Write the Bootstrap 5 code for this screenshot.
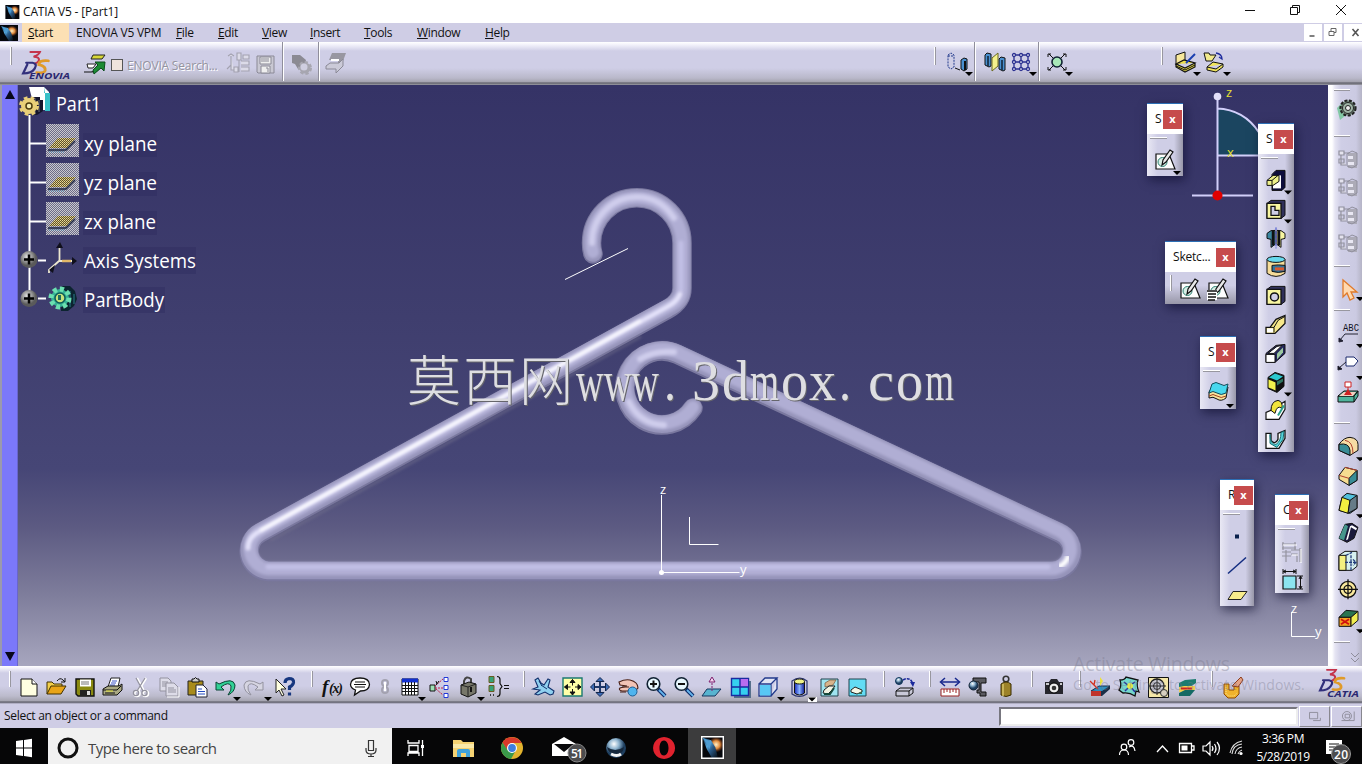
<!DOCTYPE html>
<html lang="en">
<head>
    <meta charset="UTF-8">
    <meta name="viewport" content="width=device-width, initial-scale=1.0">
    <title>CATIA V5 - [Part1]</title>
    <!-- Bootstrap CSS -->
    <link href="https://cdn.jsdelivr.net/npm/bootstrap@5.3.1/dist/css/bootstrap.min.css" rel="stylesheet">
    <style>
        body {
            width: 1362px;
            height: 764px;
            overflow: hidden;
            font-family: "Open Sans", "Noto Sans", "Noto Sans CJK SC", sans-serif;
            font-size: 12px;
            line-height: 1;
            color: #111;
            background: #cfcde5;
        }

        svg { display: block; flex: none; overflow: visible; }

        .title-bar { height: 23px; background: #fff; letter-spacing: -.15px; }
        .title-bar .caption { width: 45px; }

        .menu-bar { height: 19px; background: #cfcde5; letter-spacing: -.35px; }
        .menu-bar a { color: #111; text-decoration: none; flex: none; line-height: 19px; height: 19px; white-space: nowrap; }
        .menu-bar a::first-letter { text-decoration: underline; }
        .menu-bar .start-item { background: #fce0b4; width: 47px; padding-left: 6px; }
        .menu-bar .vpm { width: 107px; padding-left: 7px; letter-spacing: -.25px; }
        .menu-bar .vpm::first-letter { text-decoration: none; }
        .w-42 { width: 42px; }
        .w-44 { width: 44px; }
        .w-48 { width: 48px; }
        .w-54 { width: 54px; }
        .w-53 { width: 53px; }
        .w-68 { width: 68px; }
        .mdi { width: 18px; height: 17px; background: #fff; margin-left: 2px; }

        .tool-top {
            height: 43px;
            background: linear-gradient(#fff 0, #f1f0fa 3px, #cfcee6 9px, #cfcee6 26px, #b9b8ca 36px, #a3a2ae 40px, #55555f 41px, #8e8e98 42px);
        }
        .ico { width: 28px; height: 28px; }
        .ico-30 { width: 30px; }
        .ico-22 { width: 22px; }
        .ico-32 { width: 32px; }
        .grip {
            width: 18px;
            flex: none;
            background: linear-gradient(90deg, #fff 50%, #98979f 50%) no-repeat 11px 5px / 2px 16px;
        }
        .tool-top .grip { width: 19px; background-position: 10px 5px; background-size: 2px 18px; }
        .divide { width: 2px; height: 39px; margin: 0 3px; background: linear-gradient(90deg, #8f8e9b 50%, #fff 50%); flex: none; }
        .spacer { width: 80px; }
        .tick { width: 12px; height: 12px; border: 1px solid #555; background: #efe3dc; margin: 17px 4px 0 2px; }
        .dim-text { width: 96px; padding-top: 18px; color: #94939f; letter-spacing: -.2px; text-shadow: 1px 1px #fff; }

        .work { height: 581px; }
        .v-scroll { width: 18px; background: #7b78fa; border-left: 2px solid #9b99ad; border-right: 1px solid #6966cc; }
        .view { width: 1310px; }
        .side { width: 34px; background: linear-gradient(90deg, #fff 4px, #e6e5f3 7px, #cfcee6 13px, #cbcae2 28px, #b5b4c6); padding-left: 6px; }
        .side .ico-tall { width: 28px; height: 30px; }
        .side .ico-mid { width: 28px; height: 28.7px; }
        .v-grip { background: linear-gradient(#fff 50%, #98979f 50%) no-repeat 0 center / 16px 2px; height: 18px; flex: none; }
        .v-grip.g9 { height: 9px; }
        .v-grip.g23 { height: 23px; background-position: 0 13px; }
        .v-grip.g14 { height: 14px; }
        .v-grip.g25 { height: 25px; background-position: 0 15px; }

        .tool-bottom {
            height: 38px;
            background: linear-gradient(#fff 0, #f4f3fb 2px, #cfcee6 7px, #cfcee6 20px, #bcbbcc 30px, #a5a4b0 35px, #55555f 36px, #cfcde5 38px);
        }
        .tool-bottom .ico { margin-top: 7px; }
        .tool-bottom .grip { background-position: 9px 5px; }
        .status { height: 24px; background: #cfcde5; letter-spacing: -.3px; }
        .power-input { width: 299px; height: 19px; background: #fff; border: 2px solid; border-color: #77767f #eee #eee #77767f; }
        .push { width: 31px; height: 21px; border: 1px solid; border-color: #fff #88878f #88878f #fff; margin-left: 1px; }

        .task { height: 36px; background: #060607; color: #fff; }
        .search-box { width: 344px; height: 36px; background: #f1f1f1; color: #444; font-size: 15px; letter-spacing: -.5px; }
        .apps { width: 344px; }
        .apps > div { flex: 1 1 0; display: flex; align-items: center; justify-content: center; padding-top: 3px; }
        .apps .on { background: #3c3c3d; }
        .clock { width: 66px; text-align: center; line-height: 18px; letter-spacing: -.4px; padding-top: 3px; }

        /* floating toolbars over the 3D view */
        .float-bar { position: absolute; width: 36px; background: linear-gradient(90deg, #e9e8f4, #cfcee6 30%, #cfcee6 75%, #9897a8); box-shadow: 2px 4px 10px rgba(10, 10, 40, .6); border-top: 1px solid #2c6fb5; }
        .float-bar header { height: 30px; background: #fff; padding: 6px 1px 0 8px; }
        .float-bar header span { width: 8px; padding-top: 3px; letter-spacing: -.2px; }
        .float-bar header b { background: #c64b4c; color: #fff; width: 19px; height: 19px; text-align: center; line-height: 17px; font-size: 11px; position: relative; }
        .float-bar .bar-line { height: 2px; width: 17px; margin: 3px 0 0 3px; background: linear-gradient(#fff 50%, #98979f 50%); }
        .float-bar .ico { margin: 0 4px; }
        .f-sketch { left: 1147px; top: 103px; height: 73px; }
        .f-sketch .ico, .f-surface .ico { margin-top: 7px; }
        .f-solid { left: 1258px; top: 123px; height: 329px; }
        .f-solid .ico { height: 28.8px; }
        .f-solid .ico:first-of-type { margin-top: 7px; }
        .f-pair { left: 1165px; top: 241px; width: 71px; height: 63px; background: linear-gradient(#e9e8f4, #cfcee6 40%, #cfcee6 70%, #9897a8); }
        .f-pair header span { width: 42px; }
        .f-pair .grip { width: 9px; background-position: 5px 3px; }
        .f-pair .ico { margin: 3px 0 0 4px; width: 24px; }
        .f-surface { left: 1200px; top: 336px; height: 73px; }
        .f-ref { left: 1220px; top: 479px; width: 34px; height: 127px; }
        .f-cons { left: 1275px; top: 494px; width: 34px; height: 99px; }
        .f-ref .ico, .f-cons .ico { margin: 0 3px; }
        .f-ref .bar-line, .f-cons .bar-line { margin-bottom: 7px; }
        .f-cons .bar-line { margin-bottom: 8px; }
        .f-ref .ico { height: 29px; }
        .f-ref header span, .f-cons header span { width: 6px; }

        .activate { position: absolute; left: 1073px; top: 653px; color: rgba(120, 120, 140, .38); pointer-events: none; white-space: nowrap; }
        .activate .big { font-size: 19.5px; letter-spacing: -.2px; line-height: 22px; }
        .activate .sub { font-size: 14px; line-height: 20px; letter-spacing: .07px; }
    </style>
</head>
<body class="d-flex flex-column position-relative">

    <!-- icon library, every icon sits in a 28x28 box -->
    <svg width="0" height="0" class="position-absolute">
        <defs>
            <linearGradient id="bg" x1="0" y1="0" x2="0" y2="1">
                <stop offset="0" stop-color="#353366"/><stop offset=".4" stop-color="#3f3e6e"/><stop offset=".66" stop-color="#464676"/>
                <stop offset=".76" stop-color="#5c5a82"/><stop offset=".88" stop-color="#7f7e9c"/><stop offset="1" stop-color="#a7a6be"/>
            </linearGradient>
            <linearGradient id="cyl" x1="0" x2="1"><stop offset="0" stop-color="#1a2cc0"/><stop offset=".5" stop-color="#8ab4ff"/><stop offset="1" stop-color="#0a1690"/></linearGradient>
            <radialGradient id="ball" cx=".4" cy=".3"><stop offset="0" stop-color="#fff"/><stop offset=".5" stop-color="#8fb4cf"/><stop offset="1" stop-color="#1e3f60"/></radialGradient>
            <radialGradient id="knob" cx=".4" cy=".35"><stop offset="0" stop-color="#e8e8e8"/><stop offset="1" stop-color="#5a5a5a"/></radialGradient>
            <linearGradient id="comet" x1="0" y1="0" x2="1" y2="1"><stop offset="0" stop-color="#0a1a30"/><stop offset=".35" stop-color="#57a8dd"/><stop offset=".55" stop-color="#2b5d8c"/><stop offset="1" stop-color="#050508"/></linearGradient>
            <radialGradient id="flare"><stop offset="0" stop-color="#fff0c8"/><stop offset=".5" stop-color="#e08a3c"/><stop offset="1" stop-color="#803010" stop-opacity="0"/></radialGradient>
            <pattern id="dots" width="2" height="2" patternUnits="userSpaceOnUse"><rect width="2" height="2" fill="#6d6c88"/><rect width="1" height="1" fill="#c9c9cf"/><rect x="1" y="1" width="1" height="1" fill="#c9c9cf"/></pattern>
            <pattern id="dots-gold" width="2" height="2" patternUnits="userSpaceOnUse"><rect width="2" height="2" fill="#5a5230"/><rect width="1" height="1" fill="#f0dc94"/><rect x="1" y="1" width="1" height="1" fill="#d8c074"/></pattern>
            <filter id="soft" x="-5%" y="-5%" width="110%" height="110%"><feGaussianBlur stdDeviation="1.6"/></filter>

            <g id="drop"><path d="M-4 0h8l-4 4z" fill="#000"/></g>
            <g id="app"><path d="M0 0h16v16H0z" fill="#05070c"/><circle cx="10.500" cy="6" r="5.500" fill="url(#flare)"/><path d="M1 1l6 2 3 5 2 8H8L4 9z" fill="url(#comet)"/><path d="M1 1l6 3-1 5z" fill="#4d9cd2"/></g>

            <g id="new"><path d="M6 6h11l5 5v12H6z" fill="#ffffe1" stroke="#111"/><path d="M17 6v5h5" fill="#fff" stroke="#111"/></g>
            <g id="open"><path d="M4 21V9h5l2 2h8v4" fill="#f3cf4a" stroke="#403000"/><path d="M4 21l4-8h15l-5 8z" fill="#e9a417" stroke="#403000"/><path d="M14 8q3-4 6-1l2 2v-4m0 4h-4" fill="none" stroke="#111"/></g>
            <g id="save"><path d="M5 6h18v17H7l-2-2z" fill="#8a8a10" stroke="#111" stroke-width="1.400"/><path d="M9 6.500h11v7H9z" fill="#fff"/><path d="M10 9h8M10 11h8" stroke="#777"/><path d="M9 17h11v6H9z" fill="#222"/><path d="M16 18h3v4h-3z" fill="#ddd"/></g>
            <g id="print"><path d="M9 14l3-9h9l-2 9z" fill="#fff" stroke="#222"/><path d="M13 8h5M12 10h5M11 12h5" stroke="#3a54c8"/><path d="M4 16l5-3h11l3-2v6l-5 5H4z" fill="#a9a882" stroke="#111"/><path d="M4 17h14l4-4M6 20h10" stroke="#111" fill="none"/><path d="M7 18h7" stroke="#ee4"/></g>
            <g id="cut" fill="none" stroke="#fff" stroke-width="2.400"><path d="M10 5l7 13M19 5l-8 13"/><circle cx="10" cy="20.500" r="2.600"/><circle cx="18.500" cy="20.500" r="2.600"/><g stroke="#93929f" stroke-width="1.300"><path d="M9 5l7 13M18 5l-8 13"/><circle cx="9" cy="20" r="2.600"/><circle cx="17.500" cy="20" r="2.600"/></g></g>
            <g id="copy" fill="#dddce8" stroke="#93929f"><path d="M5 5h8l3 3v10H5z"/><path d="M11 10h8l4 4v9H11z"/><path d="M7 9h6M7 11h4M7 13h4M13 15h6M13 17h8M13 19h8"/><path d="M24 14v10H12" stroke="#fff" fill="none"/></g>
            <g id="paste"><path d="M5 8h15v14H5z" fill="#a88b1c" stroke="#222"/><path d="M9 9V6h2q1.500-3 3 0h2v3z" fill="#ccc" stroke="#111"/><path d="M13 12h7l4 4v8H13z" fill="#fff" stroke="#223"/><path d="M15 16h4M15 18.500h7M15 21h7" stroke="#234ac0"/></g>
            <g id="undo"><path d="M5 9v8h8l-3-3q8-6 10-1 1 4-3 9 7-3 7-10-2-8-16-1z" fill="#31d196" stroke="#0a4434"/><use href="#drop" x="26" y="24"/></g>
            <g id="redo"><path d="M23 9v8h-8l3-3q-8-6-10-1-1 4 3 9-7-3-7-10 2-8 16-1z" fill="#d6d5e2" stroke="#93929f"/><use href="#drop" x="28" y="24"/></g>
            <g id="help"><path d="M6 6v14l3-3 3 6 2-1-3-6h5z" fill="#ffffe1" stroke="#222"/><path d="M15 10q0-4 4-4.500 5 0 4.500 4-.5 3-4 4.500v3M19.500 19.500v3" fill="none" stroke="#17377f" stroke-width="3.200"/></g>

            <g id="bubble"><path d="M14 5q9 0 9.500 6.500-.5 6.500-9 6.500l-6 4 1-5q-5-2-5-5.500Q5 5 14 5z" fill="#fff" stroke="#111" stroke-width="1.300"/><path d="M9 9h10M8 11.500h12M9 14h10" stroke="#111" stroke-width="1.200"/></g>
            <g id="chain" fill="none" stroke="#a3a2b0" stroke-width="2"><circle cx="11" cy="10" r="3"/><circle cx="11" cy="17" r="3"/><path d="M11 9v9" stroke="#fff"/></g>
            <g id="table"><path d="M6 6h16v16H6z" fill="#fff" stroke="#111"/><path d="M6 5.500h16v4H6z" fill="#1230d0"/><path d="M6 12.500h16M6 15.500h16M6 18.500h16M9.500 9v13M12.500 9v13M15.500 9v13M18.500 9v13" stroke="#111"/><use href="#drop" x="26" y="24"/></g>
            <g id="links"><path d="M4 12h5v6H4z" fill="#9ee0b4" stroke="#111"/><path d="M9 13l8-7M9 15h9M10 16l7 6" stroke="#c22048" stroke-dasharray="2 1"/><path d="M18 4.500h4v4h-4zM18 12.500h4v4h-4zM18 20.500h4v4h-4z" fill="#fff" stroke="#2238d8"/><path d="M11 11l-1-3M13 8l-3 4" stroke="#111"/></g>
            <g id="lock"><path d="M9 12V8q2-6 7-2v6" fill="none" stroke="#444" stroke-width="2"/><path d="M6 12l8-3 7 2v9l-8 4-7-3z" fill="#77776a" stroke="#111"/><path d="M6 12l7 2v10M13 14l8-3" stroke="#222" fill="none"/><path d="M16 14v5" stroke="#111" stroke-width="2"/><use href="#drop" x="26" y="24"/></g>
            <g id="brace"><path d="M5 3.500h5v6H5zM5 12.500h5v6H5z" fill="#36a378" stroke="#6a5a20"/><path d="M6 22h1M9 22h1" stroke="#111" stroke-width="1.500"/><path d="M13 3.500q3 0 3 3v4l2 3-2 3v4q0 3-3 3" fill="none" stroke="#111" stroke-width="1.200"/><path d="M20 12.500h5M20 15.500h5" stroke="#111"/></g>

            <g id="fly"><path d="M5 7l3-2 3 5 3 2 4-6 2 1-2 7 6 4-1 3 -3 1-5-3-7 3-3-1 5-4-7-1 5-2z" fill="#8fd0f0" stroke="#12306c" stroke-width="1.100"/><path d="M11 12l6 4M9 8l3 5" stroke="#12306c"/></g>
            <g id="fit"><path d="M5 5h19v18H5z" fill="#ffffa8" stroke="#1b7a70" stroke-width="1.400"/><path d="M14.500 6.500v6M14.500 16v6M6.500 14h6M17 14h6M14.500 6.500l-2.500 3h5zM14.500 22l-2.500-3h5zM6.500 14l3-2.500v5zM23 14l-3-2.500v5z" fill="#111" stroke="#111"/></g>
            <g id="pan"><path d="M14 6v16M6 14h16" stroke="#1c3668" stroke-width="2"/><path d="M14 4.500l-4 4h8zM14 23.500l-4-4h8zM4.500 14l4-4v8zM23.500 14l-4-4v8z" fill="#3d6cb8" stroke="#12264c"/></g>
            <g id="hand"><path d="M5 9q6-3 11-2 8 2 8 8l-3 3-3-3-4 3H8q-4-1-2-3l7-2-7-1z" fill="#f2c3b5" stroke="#4a2016" stroke-width="1.100"/><path d="M8 14h7M6 19h6" stroke="#4a2016"/><circle cx="18.500" cy="18.500" r="4.500" fill="#4fb4ee" stroke="#1d5d94"/></g>
            <g id="zoomer"><path d="M16 16l7 7" stroke="#0c2c68" stroke-width="4"/><path d="M17 17l6 6" stroke="#64b4ee" stroke-width="1.800"/><circle cx="11.500" cy="11" r="6.300" fill="#e8f8ff" stroke="#123" stroke-width="1.600"/><path d="M8 11h7" stroke="#111" stroke-width="2"/></g>
            <g id="zoomin"><use href="#zoomer"/><path d="M11.500 7.500v7" stroke="#111" stroke-width="2"/></g>
            <g id="normal"><path d="M9 16h14l-6 7H4z" fill="#58b4d0" stroke="#16365e"/><path d="M14 18V8" stroke="#802070" stroke-dasharray="2 1"/><path d="M14 4l-3 5h6z" fill="#f2d8f0" stroke="#802070"/></g>
            <g id="quad"><path d="M8 8h17v17H8z" fill="#56708c"/><path d="M5.500 5.500h17v17h-17z" fill="#35d0f0" stroke="#1a2ba0" stroke-width="1.400"/><path d="M14 6h8v8h-8z" fill="#b86cf0"/><path d="M14 5v18M5 14h18" stroke="#1a2ba0" stroke-width="1.400"/></g>
            <g id="iso"><path d="M5 11h12v12H5zM5 11l6-6h12l-6 6M23 5v11l-6 7" fill="#e0e4f4" stroke="#223a8c" stroke-width="1.300"/><path d="M6 12h10.500v10.500H6z" fill="#58c8f4"/><use href="#drop" x="27" y="24"/></g>
            <g id="shade"><path d="M7 8v13q7 5 15 0V8q-7-6-15 0z" fill="none" stroke="#2a3470" stroke-width="1.200"/><path d="M9.500 9v11q5 4 10 0V9z" fill="url(#cyl)" stroke="#111"/><ellipse cx="14.500" cy="8.500" rx="5" ry="2.500" fill="#eef288" stroke="#111"/><path d="M23 24h9v5h-9z" fill="#fff"/><use href="#drop" x="27" y="24.500"/></g>
            <g id="hide1"><path d="M6 6h17v17H6z" fill="#9fe4f0" stroke="#21424e"/><path d="M10 10l5-3h6l-3 5-8 2z" fill="#d8b48c" stroke="#7a5a3c" stroke-width=".7"/><path d="M9 17l5-4 6 0-3 4-4 4-5-1z" fill="#f2f4e4" stroke="#222"/><path d="M9 21h6l4-6" stroke="#174a3c" fill="none" stroke-width="2"/></g>
            <g id="hide2"><path d="M6 6h17v17H6z" fill="#62dcf4" stroke="#21424e"/><path d="M8 17l4-3 7 3v2l-5 2-6-2z" fill="#f5f8e6" stroke="#222"/><path d="M14 21l5-3v3h-4z" fill="#3b6c50"/></g>

            <g id="update"><circle cx="9" cy="8" r="3.500" fill="url(#ball)" stroke="#12385c"/><path d="M13 7q7-4 10 4" fill="none" stroke="#1c2a9c" stroke-width="1.500" stroke-dasharray="3 1"/><path d="M20 9l3 5 2-5z" fill="#1c2a9c"/><path d="M6 18l4-3h13v5l-4 3H6zM6 18h13v5M19 18l4-3" fill="#c9c9d8" stroke="#111"/></g>
            <g id="measure"><path d="M5 16h18v7H5z" fill="#fff" stroke="#922"/><path d="M8 16v4M11 16v3M14 16v4M17 16v3M20 16v4" stroke="#922"/><path d="M5 9h18" stroke="#17278c" stroke-width="1.500"/><path d="M9 5L4.500 9 9 13M19 5l4.500 4-4.500 4" fill="none" stroke="#17278c" stroke-width="1.500"/></g>
            <g id="clamp"><path d="M9 5h13v5h-5v9h5v4h-6v-3h-3v-3h2V9H9z" fill="#5a5a60" stroke="#111"/><circle cx="9.500" cy="12.500" r="4.500" fill="url(#ball)" stroke="#123"/></g>
            <g id="weight"><circle cx="14" cy="6" r="2.800" fill="none" stroke="#333" stroke-width="1.600"/><path d="M9 11q5-4 10 0v11q-5 3-10 0z" fill="#9c8228" stroke="#3a2c00"/><path d="M11 11v12" stroke="#d8c468" stroke-width="1.500"/></g>
            <g id="camera"><path d="M5 9h4l2-3h6l2 3h4v12H5z" fill="#26262c"/><circle cx="14" cy="15" r="5" fill="#eee" stroke="#000"/><circle cx="14" cy="15" r="2.300" fill="#333"/><path d="M6 11h3M20 11h2" stroke="#fff" stroke-width="1.500"/></g>
            <g id="r1"><path d="M5 18l8-5h11l-8 6z" fill="#2d8fc0" stroke="#12304c"/><path d="M5 18h11l8-5v3l-8 7H5z" fill="#1c3048"/><path d="M5 18h10v5H5z" fill="#c0352c"/><path d="M4 8l8 8M9 7l-1 5" stroke="#d03020" stroke-width="1.300"/><path d="M14 4v9l3-5z" fill="#ece040"/></g>
            <g id="r2"><path d="M5 7q5 0 6-3l12 3q-2 5 1 12l-3-1-1 5q-6-4-12-3l-4-3q3-4 1-10z" fill="#74d7ce" stroke="#111" stroke-width="1.300"/><path d="M9 9l5 4 6-4M10 18l5-5 5 6" stroke="#23319c" fill="none" stroke-width="1.500"/><circle cx="15" cy="13" r="3" fill="#e4e84c"/></g>
            <g id="r3"><path d="M4.500 4.500h20v20h-20z" fill="#f4e7a8" stroke="#111"/><circle cx="13" cy="13" r="7" fill="#c9c9d2" stroke="#222" stroke-width="1.300"/><circle cx="13" cy="13" r="3.500" fill="none" stroke="#222"/><path d="M13 4v18M4 13h18" stroke="#222"/><circle cx="20" cy="20" r="3.500" fill="#d8d0c0" stroke="#333"/></g>
            <g id="r4"><path d="M6 10l6-3 11-1v4l-6 4H6z" fill="#1c7c70"/><path d="M6 14l5-1h11v4l-5 2H6z" fill="#f0d050"/><path d="M6 20l6-3 10 0-5 6H6z" fill="#156a64"/><path d="M8 15.500h11" stroke="#c22" stroke-width="2"/></g>
            <g id="r5"><path d="M5 11h5v6h5v-4h5v8l-4 4H9l-4-4z" fill="#f0b32c" stroke="#8e4c08"/><path d="M7 14v7l3 2h5l3-3" stroke="#fbe08c" stroke-dasharray="1 1" fill="none"/><path d="M13 13l9-9 2 3-5 7z" fill="#e3a184" stroke="#8c3c1c"/></g>

            <g id="swirl"><path d="M3 22h7q8 0 10-8" fill="none" stroke="#111" stroke-width="1.200"/><path d="M14 12h10l-1 9-3-3-7 6-1-4 5-5z" fill="#1c8a34" stroke="#0c4c1c"/><path d="M12 5h12l-3 4H10z" fill="#d8d838" stroke="#222"/><path d="M6 14h9l-3 4H7z" fill="#fff" stroke="#222"/></g>
            <g id="grey-tree" fill="#dcdbe8" stroke="#a3a2b0" stroke-width="1.100"><path d="M4 20l4-4M8 7v14h3M5 7l3-2 3 2M11 18h4v5h-4zM14 4h4v7h-4zM20 6h6v4h-6zM18 12h8v4h-8M18 18h8v4h-8M16 11v12"/></g>
            <g id="grey-disk"><path d="M6 6h17v17H7l-1-1z" fill="#c9c8d3" stroke="#8a8996"/><path d="M9 7h11v7H9zM10 16h9v7h-9z" fill="#eee" stroke="#8a8996"/><path d="M10 9h8M10 11h8M15 18h2v4" stroke="#8a8996" fill="none"/></g>
            <g id="grey-gears"><path d="M5 5h8l6 5-2 7-6 2-3-5-3-1z" fill="#8b8a93"/><circle cx="18" cy="18" r="5.500" fill="#a7a6b0" stroke="#a7a6b0" stroke-width="3" stroke-dasharray="3 2"/><circle cx="17" cy="17" r="3.500" fill="#cfcee0"/></g>
            <g id="grey-swap"><path d="M10 4h14l-3 8-5 4v-5H7z" fill="#9897a1"/><path d="M4 17l4-3h9l4-4v7l-7 7v-4H4z" fill="#cbcad8" stroke="#8a8996"/><path d="M9 11h8" stroke="#fff" stroke-width="2"/></g>
            <g id="cyl1"><path d="M5 7l3-2 3 2v12l-3 2-3-2zM5 8h6" fill="none" stroke="#223a8c" stroke-dasharray="2 1"/><path d="M12 20l5 2" stroke="#111"/><path d="M18 12l3-2 3 1v10l-3 2-3-2z" fill="#4a90d0" stroke="#111"/><path d="M22 13v9" stroke="#111" stroke-width="2"/><use href="#drop" x="26" y="24"/></g>
            <g id="cyl2"><path d="M5 7l2-2 4 1v12l-2 1-4-2z" fill="#4a90d0" stroke="#111"/><path d="M19 11l2-2 4 1v12l-2 1-4-2z" fill="#4a90d0" stroke="#111"/><path d="M8 8v10M22 12v10" stroke="#123" stroke-width="1.500"/><path d="M12 10l6-5v13l-6 5z" fill="#f4f08c" stroke="#6a6a20"/></g>
            <g id="grid9" fill="#fff" stroke="#2a2f90" stroke-width="1.300"><path d="M7 7h14M7 14h14M7 21h14M7 7v14M14 7v14M21 7v14"/><circle cx="7" cy="7" r="1.500"/><circle cx="14" cy="7" r="1.500"/><circle cx="21" cy="7" r="1.500"/><circle cx="7" cy="14" r="1.500"/><circle cx="14" cy="14" r="1.500"/><circle cx="21" cy="14" r="1.500"/><circle cx="7" cy="21" r="1.500"/><circle cx="14" cy="21" r="1.500"/><circle cx="21" cy="21" r="1.500"/><use href="#drop" x="26" y="24" stroke="none"/></g>
            <g id="scale"><path d="M6 6l16 16M22 6L6 22M5 9V6h3M23 9V6h-3M5 19v3h3M23 19v3h-3" stroke="#111" fill="none"/><circle cx="14" cy="14" r="5" fill="#a8e8b8" stroke="#123" stroke-width="1.600"/><use href="#drop" x="26" y="24"/></g>
            <g id="apply"><path d="M5 7l9-3v9l-9 4z" fill="#f8e89c" stroke="#111"/><path d="M5 16l8-4 11 3-10 5zM5 16v3l9 5 10-5v-4" fill="#ece04c" stroke="#111" stroke-width="1.200"/><path d="M5 18l9 4 10-5" stroke="#111" fill="none"/><path d="M15 15l9-9" stroke="#1a3fb0" stroke-width="2"/><use href="#drop" x="26" y="24"/></g>
            <g id="catalog"><path d="M4 5h5l1 2h6l-4 6H6z" fill="#f2ea8c" stroke="#111"/><path d="M16 5q6 1 6 6l-3-2" fill="none" stroke="#1c2a9c" stroke-width="1.300"/><path d="M7 19l6-5 10 2-7 5zM7 19v3l9 2 7-5v-3" fill="#f0e45c" stroke="#111"/><use href="#drop" x="27" y="24"/></g>

            <g id="pencil"><path d="M5 8h13l6 15H5z" fill="#fdfdfd" stroke="#111" stroke-width="1.200"/><circle cx="11.500" cy="16" r="4.500" fill="#d8efe6" stroke="#2a8070"/><path d="M11 19l1-5 7-10 3 2-7 10z" fill="#e8e8e8" stroke="#111" stroke-width="1.200"/></g>
            <g id="pencil-pos"><use href="#pencil"/><path d="M3 15h10v10H3z" fill="#fff"/><path d="M3 16h10M4 19h8M4 22h8M4 25h7" stroke="#111" stroke-width="1.500"/></g>
            <g id="pad"><path d="M10 8l4-4h9v17l-3 3H10z" fill="#0e0e3c" stroke="#111"/><path d="M11 9h8v13h-8z" fill="#fff"/><path d="M5 14l6-5h6v6l-6 4H5z" fill="#eef08a" stroke="#111"/><path d="M5 14h5v5M10 14l6-5" stroke="#111" fill="none"/><use href="#drop" x="26" y="24"/></g>
            <g id="pocket"><path d="M5 8l4-3h14v15l-4 3H5z" fill="#30305a" stroke="#111"/><path d="M5 8h14v15H5z" fill="#f8f6a0" stroke="#111" stroke-width="1.300"/><path d="M9 11h4v4h4v5H9z" fill="#cfcee6" stroke="#111" stroke-width="1.300"/><use href="#drop" x="26" y="24"/></g>
            <g id="shaft"><path d="M5 9q4-4 8-3v14l-4 3v-8l-4-1z" fill="#3a86a0" stroke="#111"/><path d="M23 9q-4-4-8-3v14l4 3v-8l4-1z" fill="#f8f6a0" stroke="#111"/><path d="M11 6v15M17 6v15" stroke="#111" stroke-width="2.500"/><path d="M14 3v21" stroke="#3a4ad0" stroke-dasharray="3 1"/></g>
            <g id="groove"><path d="M5 7v14q9 6 18 0V7" fill="#f6dc98" stroke="#111"/><path d="M10 13q6-1 13 0v6q-7 2-13 0z" fill="#34749c" stroke="#111"/><path d="M13 15h9v3h-9z" fill="#d85a30"/><ellipse cx="14" cy="7" rx="9" ry="3" fill="#66d8ec" stroke="#111"/></g>
            <g id="hole"><path d="M5 8l4-3h14v15l-4 3H5z" fill="#30305a" stroke="#111"/><path d="M5 8h14v15H5z" fill="#f8f6a0" stroke="#111" stroke-width="1.300"/><circle cx="12.500" cy="15.500" r="4" fill="#cfcee6" stroke="#111" stroke-width="1.500"/></g>
            <g id="rib"><path d="M4 23v-6h4l6-8 9-4v8L13 23z" fill="#f7e88a" stroke="#111" stroke-width="1.300"/><path d="M8 17h4l4-7 7-4M12 17v5" stroke="#111" fill="none"/><path d="M5 18h6v4H5z" fill="#fff"/></g>
            <g id="slot"><path d="M4 14l10-8 9-1v9L13 23H4z" fill="#24265c" stroke="#111"/><path d="M4 15h9v8H4zM6 14l9-7 5-1-8 8z" fill="#fff" stroke="#111"/><path d="M15 14l6-6v5l-6 7z" fill="#9cc8a0"/></g>
            <g id="cube"><path d="M6 9l7-5 9 3v11l-7 6-9-4z" fill="#111" stroke="#111"/><path d="M7 9l6-4 8 3-6 4z" fill="#2cc8d0"/><path d="M6.500 11l7 3v8l-7-3z" fill="#f2f24c"/><path d="M15 13l6-3v3l-6 4z" fill="#2f7460"/><use href="#drop" x="26" y="24"/></g>
            <g id="loft"><path d="M4 23v-7l5-2q3-9 9-6l5-3v8l-6 10z" fill="#fff" stroke="#111" stroke-width="1.200"/><path d="M9 14q0-9 7-10 5 1 4 8-5-4-7 5z" fill="#f2e43c" stroke="#111"/><path d="M16 19l6-10" fill="none" stroke="#2aa08a" stroke-width="2"/></g>
            <g id="loft2"><path d="M4 8h5v7q4 5 7-1V8l7-3v8l-6 10H4z" fill="#fff" stroke="#111" stroke-width="1.300"/><path d="M8 9q0 10 6 10 5-3 5-12l3-1-1 8-6 8-7-4z" fill="#56d4dc" stroke="#146c70"/></g>
            <g id="surface"><path d="M5 13l3-5q5-3 8 0t8 0l-2 11q-5 4-9 1t-8-1z" fill="#f8e49c" stroke="#111"/><path d="M8 5q4-3 8 0t8 0l-2 9q-5 3-9 0t-8 0z" fill="#48d8ee" stroke="#124e5c"/><path d="M5 17q4-3 8 0t9 0" stroke="#a24020" fill="none"/><use href="#drop" x="26" y="25"/></g>
            <g id="dot"><path d="M12 12h4v4h-4z" fill="#08204c"/></g>
            <g id="line"><path d="M5 22L23 6" stroke="#122c80" stroke-width="1.500"/></g>
            <g id="plane"><path d="M10 11h14l-6 8H5z" fill="#f8ec8c" stroke="#222"/></g>
            <g id="grey-cons" stroke="#94939f" fill="none" stroke-width="1.200"><path d="M4 6h14M4 10h14M4 14h9M4 18h9M5 4v8M17 4v8M13 12h10v12M13 16h6v8M8 12v12M22 10v14"/><path d="M5 7h14M14 17h6M23 11v14" stroke="#fff"/></g>
            <g id="cons"><path d="M5 10h13v13H5z" fill="#8ce4f0" stroke="#111" stroke-width="1.200"/><path d="M5 3v5M18 3v5M5 5.500h13M8 4L5 5.500 8 7M15 4l3 1.500L15 7M19 10h6M19 23h6M22.500 10v13M21 13l1.500-3 1.500 3M21 20l1.500 3 1.500-3" fill="none" stroke="#111"/></g>

            <g id="gear"><path d="M3 14l6-6 2 14-5 4z" fill="#82c8a4"/><circle cx="14" cy="14" r="7.500" fill="#7d9686" stroke="#222" stroke-width="2.200" stroke-dasharray="3 1.500"/><circle cx="14" cy="14" r="5.500" fill="#9fb4a6" stroke="#222"/><circle cx="14" cy="14" r="2.500" fill="#eee" stroke="#222"/></g>
            <g id="grey-box"><path d="M14 8h9v15h-9z" fill="#acabb7"/><path d="M5 6h5v4H5zM5 14h5v4H5zM10 8h5M7 10v10h5" fill="#e4e3ee" stroke="#908f9d" stroke-width="1.200"/><path d="M13 9l5-3 5 2v12l-5 3-5-2z" fill="none" stroke="#908f9d"/><path d="M14 11h5v3h-5zM14 17h6v3h-6z" fill="#e8e7f2"/></g>
            <g id="arrow"><path d="M9 5v17l4-4 3 7 4-2-3-6h6z" fill="#ffd9b0" stroke="#e07a2a" stroke-width="1.300"/><use href="#drop" x="26" y="22"/></g>
            <g id="leader" fill="none" stroke="#223"><path d="M24 16H11l-5 6"/><path d="M5 24v-4l4 3z" fill="#223"/><use href="#drop" x="26" y="26" stroke="none"/></g>
            <g id="flag"><path d="M12 9h8l4 4-4 5h-8z" fill="#fff" stroke="#1c2a6c"/><path d="M12 14l-7 6M4 22v-4l4 3z" fill="#111" stroke="#223"/><use href="#drop" x="26" y="28"/></g>
            <g id="datum"><path d="M4 18l6-5h14l-4 5zM4 18h16v6H4zM20 18l4-5v5l-4 6" fill="#4eb49c" stroke="#111"/><path d="M5 18l5-4h12l-3 4z" fill="#f4cfc0"/><path d="M11 4h6v5h-6zM14 9v4" fill="#fff" stroke="#c22"/><path d="M10 17l4-6 4 6z" fill="#c22"/></g>
            <g id="fillet"><path d="M5 12q5-7 11-7 8 1 8 7v6l-8 5-11-5z" fill="#f6dca4" stroke="#111"/><path d="M5 12q10-2 11 6v5L5 18z" fill="#388c96" stroke="#111"/><path d="M11 8q8 1 8 13" stroke="#b04030" fill="none"/></g>
            <g id="chamfer"><path d="M5 14l6-8 12 3v10l-8 5-10-6z" fill="#f6dc90" stroke="#111"/><path d="M15 17v7l8-5V9z" fill="#388c96" stroke="#111"/><path d="M11 6l12 3M5 14l10 3" stroke="#b04030" fill="none"/></g>
            <g id="draft"><path d="M8 8l5-4 10 2v13l-7 5-11-3z" fill="#52c0dc" stroke="#111"/><path d="M8 8l8 3-2 13-9-3z" fill="#f2f040" stroke="#111"/><path d="M16 11l7-5v13l-9 5z" fill="#667c88" stroke="#111"/></g>
            <g id="shell"><path d="M5 20l6-14 7-1 6 4-4 11-7 4z" fill="#1a1a3c" stroke="#111"/><path d="M5 20l6-14 3 2-4 14z" fill="#46968c"/><path d="M12 22l4-14 2-1 5 3-1 2-5-3-3 12z" fill="#fff"/></g>
            <g id="thick"><path d="M5 8l6-4h12v15l-5 4H5z" fill="#d6f0f0" stroke="#111"/><path d="M5 8h7v15H5z" fill="#f4f080" stroke="#111"/><path d="M12 8l6-3M17 8v15M11 15h11M19 12l3 3-3 3" stroke="#223c7c" stroke-width="1.300" fill="none" stroke-dasharray="3 1"/></g>
            <g id="target" fill="none" stroke="#111" stroke-width="1.300"><circle cx="14" cy="14" r="8" fill="#f8e89c"/><circle cx="14" cy="14" r="4"/><path d="M14 4v20M4 14h20"/></g>
            <g id="remove"><path d="M5 13l7-7 12 1-7 6z" fill="#2a7450" stroke="#111"/><path d="M5 13h12v9H5z" fill="#f5a020" stroke="#111"/><path d="M17 13l7-6v9l-7 6z" fill="#f0ec50" stroke="#111"/><path d="M7 15l8 5M15 15l-8 5" stroke="#d01010" stroke-width="1.800"/><use href="#drop" x="26" y="25"/></g>

            <!-- Dassault mark: red swoosh over slanted D and S -->
            <g id="ds" stroke-linecap="round"><path d="M9 3h9q-1 3-6 5 6 0 5 4-1 2-4 3" fill="none" stroke="#c4344c" stroke-width="2"/><path d="M5 14h6q5 1 2 6-3 5-11 5l4-9" fill="none" stroke="#32307c" stroke-width="2.200"/><path d="M26 12q-9-1-9 4 7 2 6 6-1 3-8 2" fill="none" stroke="#e09a28" stroke-width="2.800"/></g>
            <g id="treeplane"><path d="M0 0h33v33H0z" fill="url(#dots)"/><path d="M3 24l9-10h18l-9 10z" fill="url(#dots-gold)"/><path d="M2 26h18l9-9" stroke="#1c2440" stroke-width="1.500" fill="none"/><path d="M3 28h16" stroke="#4a90b8" stroke-dasharray="1 1"/></g>
        </defs>
    </svg>

    <!-- window caption -->
    <header class="title-bar d-flex align-items-center flex-shrink-0">
        <svg width="15" height="14" viewBox="-1 0 16 16" class="ms-1 me-1"><use href="#app"/></svg>
        <span>CATIA V5 - [Part1]</span>
        <div class="d-flex ms-auto align-items-center pb-1">
            <svg class="caption" height="12" viewBox="0 0 45 12"><path d="M18 6.500h10" stroke="#111"/></svg>
            <svg class="caption" height="12" viewBox="0 0 45 12"><path d="M18.500 3.500h7v7h-7zM20.500 3.500v-2h7v7h-2" fill="none" stroke="#111"/></svg>
            <svg class="caption" height="12" viewBox="0 0 45 12"><path d="M19 1l10 10M29 1L19 11" stroke="#111"/></svg>
        </div>
    </header>

    <nav class="menu-bar d-flex align-items-center flex-shrink-0">
        <svg width="18" height="16" viewBox="0 0 16 16" preserveAspectRatio="none" class="ms-0 me-1"><use href="#app"/></svg>
        <a class="start-item" href="#">Start</a>
        <a class="vpm" href="#">ENOVIA V5 VPM</a>
        <a class="w-42" href="#">File</a>
        <a class="w-44" href="#">Edit</a>
        <a class="w-48" href="#">View</a>
        <a class="w-54" href="#">Insert</a>
        <a class="w-53" href="#">Tools</a>
        <a class="w-68" href="#">Window</a>
        <a href="#">Help</a>
        <div class="d-flex ms-auto">
            <svg class="mdi" viewBox="0 0 17 17"><path d="M5 12h5" stroke="#555" stroke-width="1.500"/></svg>
            <svg class="mdi" viewBox="0 0 17 17"><path d="M4.500 7.500h5v4h-5zM6.500 7V4.500h5v4h-2" fill="none" stroke="#666"/></svg>
            <svg class="mdi" viewBox="-2 0 17 17"><path d="M6 5l6 7M12 5l-6 7" stroke="#555" stroke-width="1.600"/></svg>
        </div>
    </nav>

    <div class="tool-top d-flex flex-shrink-0">
        <div class="grip"></div>
        <svg width="62" height="40" viewBox="19 42 62 40"><use href="#ds" transform="translate(21 49) scale(1.050 .98)"/><text x="29" y="79" textLength="41" lengthAdjust="spacingAndGlyphs" font-size="9" font-weight="bold" font-style="italic" fill="#2a2870">ENOVIA</text></svg>
        <svg class="ico mt-2" viewBox="0 0 28 28"><use href="#swirl"/></svg>
        <div class="tick"></div>
        <div class="dim-text text-nowrap">ENOVIA Search...</div>
        <svg class="ico mt-2" viewBox="0 1 28 28"><use href="#grey-tree"/></svg>
        <svg class="ico mt-2" viewBox="0 0 28 28"><use href="#grey-disk"/></svg>
        <div class="divide"></div>
        <svg class="ico mt-2" viewBox="0 0 28 28"><use href="#grey-gears"/></svg>
        <div class="divide"></div>
        <svg class="ico mt-2" viewBox="1 1 28 28"><use href="#grey-swap"/></svg>
        <div class="d-flex ms-auto">
            <div class="grip"></div>
            <svg class="ico mt-1" viewBox="0 -2 28 28"><use href="#cyl1"/></svg>
            <div class="divide"></div>
            <svg class="ico mt-1" viewBox="-1 -2 28 28"><use href="#cyl2"/></svg>
            <svg class="ico mt-1" viewBox="0 -2 28 28"><use href="#grid9"/></svg>
            <div class="divide"></div>
            <svg class="ico mt-1" viewBox="0 -2 28 28"><use href="#scale"/></svg>
            <div class="spacer"></div>
            <div class="grip"></div>
            <svg class="ico ico-30 mt-1" viewBox="0 -2 28 28"><use href="#apply"/></svg>
            <svg class="ico mt-1" viewBox="0 -2 28 28"><use href="#catalog"/></svg>
            <div class="spacer"></div><div class="w-54"></div>
        </div>
    </div>

    <main class="work d-flex flex-shrink-0">
        <div class="v-scroll d-flex flex-column justify-content-between align-items-center py-1">
            <svg width="12" height="11"><path d="M1 10h10L6 1z" fill="#08081c"/></svg>
            <svg width="12" height="11"><path d="M1 1h10L6 10z" fill="#08081c"/></svg>
        </div>

        <!-- 3D view -->
        <svg class="view" height="581" viewBox="18 85 1310 581">
            <rect x="18" y="85" width="1310" height="581" fill="url(#bg)"/>

            <!-- hanger tube, dark rim to light core -->
            <g fill="none" stroke-linecap="round" stroke-linejoin="round">
                <path d="M593 254Q591.500 249 591.500 243A45 45 0 0 1 682 243V288Q682 301 668 309L260 533A20.500 20.500 0 0 0 268 571.500H1051A20 20 0 0 0 1059.500 533L677.600 354.500A37 37 0 1 0 693 408" stroke="#7a789f" stroke-width="19.500"/>
                <path d="M593 253Q591.500 248 591.500 243A45 45 0 0 1 682 243V288Q682 301 668 308L260 532A20.500 20.500 0 0 0 268 570.500H1051A20 20 0 0 0 1059.500 532L677.600 353.500A37 37 0 1 0 693 407.500" stroke="#9593b9" stroke-width="17.500"/>
                <path d="M593 252Q591.500 248 591.500 243A45 45 0 0 1 682 243V288Q682 301 668 307L260 531A20.500 20.500 0 0 0 268 569H1051A20 20 0 0 0 1059.500 531L677.600 352.500A37 37 0 1 0 693 407" stroke="#b0aed4" stroke-width="12.500" filter="url(#soft)"/>
                <path d="M268 567H1048M681 243V290" stroke="#c2c0e6" stroke-width="5" filter="url(#soft)"/>
                <path d="M592 243A45 45 0 0 1 637 197Q660 197 674 218M640 359Q655 350 674 352M629 402Q640 424 664 425" stroke="#cfcdec" stroke-width="6" filter="url(#soft)"/>
                <path d="M680 294Q677 302 667 307L260 531Q248 537 248 548" stroke="#e4e2fa" stroke-width="5" filter="url(#soft)"/>
                <path d="M640 321L261 530" stroke="#fff" stroke-width="2.500" filter="url(#soft)"/>
                <path d="M271 540L640 337" stroke="#75738f" stroke-width="2.500" opacity=".6" filter="url(#soft)"/>
                <path d="M1060 566q6-3 8-9" stroke="#fff" stroke-width="5" filter="url(#soft)"/>
            </g>
            <path d="M565 279.500L628 248.500" stroke="#fff"/>

            <!-- axis systems -->
            <g fill="none" stroke="#fff">
                <path d="M661.500 495v77.500h78M689.500 517v27.500h29M1291.500 612v24.500h24"/>
            </g>
            <circle cx="661.500" cy="572.500" r="2.500" fill="#fff"/>
            <g fill="#fff" font-size="13">
                <text x="660" y="494">z</text><text x="740" y="574">y</text>
                <text x="1291" y="613">z</text><text x="1315" y="636">y</text>
            </g>

            <!-- compass -->
            <path d="M1217 108.500q27 1 42 24V155h-42z" fill="#1b4560"/>
            <path d="M1217.500 96v99M1192 195.500h61M1217 155.500h42M1217 108.500q27 1 42 24" fill="none" stroke="#d2cffa" stroke-width="2"/>
            <circle cx="1217.500" cy="96.500" r="3.800" fill="#e2dff8"/><circle cx="1217.500" cy="195.500" r="5" fill="#e00000"/>
            <g fill="#e6e030" font-size="13"><text x="1226" y="97">z</text><text x="1227" y="157">x</text></g>

            <!-- specification tree -->
            <path d="M29.500 115v183M30 143.500h17M30 182.500h17M30 221.500h17M38 260.500h8M38 298.500h8" stroke="#fff" stroke-width="2"/>
            <path d="M29 87h15l5 5v18H35z" fill="#fff"/><path d="M44 87v6h6v18h-5V93z" fill="#37c0c8"/>
            <path d="M31 97h9v3h3v11l-6 4-6-1z" fill="#15152c"/><path d="M35 98v15M39 100v12" stroke="#6a6a78"/>
            <circle cx="29" cy="106" r="8" fill="#e9cf78" stroke="#e9cf78" stroke-width="4" stroke-dasharray="3.500 3"/><circle cx="29" cy="106" r="3" fill="#f6eeb0" stroke="#4c3c10" stroke-width="1.500"/>
            <use href="#treeplane" x="46" y="124"/><use href="#treeplane" x="46" y="163"/><use href="#treeplane" x="46" y="202"/>
            <circle cx="29" cy="259.500" r="8.500" fill="url(#knob)"/><circle cx="29" cy="298.500" r="8.500" fill="url(#knob)"/>
            <path d="M24 259.500h10M29 254.500v10M24 298.500h10M29 293.500v10" stroke="#000" stroke-width="2.500"/>
            <path d="M59.500 246v15h14M59 261l-10 9v3" stroke="#ece7d0" stroke-width="1.800" fill="none"/><path d="M60 242l-4 6h7zM77 261l-5-4v8zM53 273l2-8-6 5z" fill="#10101c"/><path d="M62 261h9" stroke="#e2b868" stroke-width="2.500"/>
            <path d="M62 286h8l5 5 2 8-3 7-6 5h-7z" fill="#0c2430"/><path d="M70 291v16M74 294v10" stroke="#2a7c8c"/><circle cx="60" cy="298" r="9" fill="#35b294" stroke="#6ce0b0" stroke-width="5" stroke-dasharray="4 3"/><circle cx="60" cy="298" r="5" fill="#c5e27c" stroke="#0c5a58" stroke-width="1.500"/><path d="M58 295h3v5h-3z" fill="#1c6c60"/>
            <g fill="#2f2d60" opacity=".45"><path d="M83 133h74v24H83zM83 172h74v24H83zM83 211h74v24H83zM83 247h113v27H83zM83 287h82v26H83z"/></g>
            <g fill="#fff" font-size="19.500">
                <text x="56" y="111" textLength="45" lengthAdjust="spacingAndGlyphs">Part1</text>
                <text x="84" y="151" textLength="73" lengthAdjust="spacingAndGlyphs">xy plane</text>
                <text x="84" y="190" textLength="73" lengthAdjust="spacingAndGlyphs">yz plane</text>
                <text x="84" y="229" textLength="72" lengthAdjust="spacingAndGlyphs">zx plane</text>
                <text x="84" y="268" textLength="112" lengthAdjust="spacingAndGlyphs">Axis Systems</text>
                <text x="84" y="307" textLength="80" lengthAdjust="spacingAndGlyphs">PartBody</text>
            </g>

            <!-- site mark -->
            <g fill="#dedee2" style="filter: drop-shadow(1.5px 1px 0 #66666c)">
                <text x="407 463 519" y="401" font-size="54" font-weight="300" font-family="Noto Sans CJK SC, sans-serif">莫西网</text>
                <g font-family="Liberation Serif, serif" font-size="58">
                    <text x="576" y="400" textLength="83" lengthAdjust="spacingAndGlyphs">www</text>
                    <text x="664" y="400" textLength="12" lengthAdjust="spacingAndGlyphs">.</text>
                    <text x="692" y="400" textLength="28" lengthAdjust="spacingAndGlyphs">3</text>
                    <text x="722" y="400" textLength="27" lengthAdjust="spacingAndGlyphs">d</text>
                    <text x="750" y="400" textLength="29" lengthAdjust="spacingAndGlyphs">m</text>
                    <text x="781" y="400" textLength="27" lengthAdjust="spacingAndGlyphs">o</text>
                    <text x="809" y="400" textLength="27" lengthAdjust="spacingAndGlyphs">x</text>
                    <text x="839" y="400" textLength="12" lengthAdjust="spacingAndGlyphs">.</text>
                    <text x="868" y="400" textLength="26" lengthAdjust="spacingAndGlyphs">c</text>
                    <text x="896" y="400" textLength="27" lengthAdjust="spacingAndGlyphs">o</text>
                    <text x="925" y="400" textLength="29" lengthAdjust="spacingAndGlyphs">m</text>
                </g>
            </g>
        </svg>

        <aside class="side d-flex flex-column">
            <div class="v-grip g9"></div>
            <svg class="ico" viewBox="0 0 28 28"><use href="#gear"/></svg>
            <div class="v-grip g23"></div>
            <svg class="ico" viewBox="0 0 28 28"><use href="#grey-box"/></svg>
            <svg class="ico" viewBox="0 0 28 28"><use href="#grey-box"/></svg>
            <svg class="ico" viewBox="0 0 28 28"><use href="#grey-box"/></svg>
            <svg class="ico" viewBox="0 0 28 28"><use href="#grey-box"/></svg>
            <div class="v-grip"></div>
            <svg class="ico" viewBox="0 0 28 28"><use href="#arrow"/></svg>
            <div class="v-grip g14"></div>
            <svg class="ico-tall" viewBox="0 0 28 28"><use href="#leader"/><text x="9" y="13" font-size="10" textLength="16" lengthAdjust="spacingAndGlyphs" font-family="Liberation Mono, monospace" fill="#112">ABC</text></svg>
            <svg class="ico-tall" viewBox="0 0 28 28"><use href="#flag"/></svg>
            <svg class="ico-tall" viewBox="0 0 28 28"><use href="#datum"/></svg>
            <div class="v-grip g25"></div>
            <svg class="ico-mid" viewBox="0 0 28 28"><use href="#fillet"/><use href="#drop" x="26" y="25"/></svg>
            <svg class="ico-mid" viewBox="0 0 28 28"><use href="#chamfer"/></svg>
            <svg class="ico-mid" viewBox="0 0 28 28"><use href="#draft"/><use href="#drop" x="26" y="25"/></svg>
            <svg class="ico-mid" viewBox="0 0 28 28"><use href="#shell"/></svg>
            <svg class="ico-mid" viewBox="0 0 28 28"><use href="#thick"/></svg>
            <svg class="ico-mid" viewBox="0 0 28 28"><use href="#target"/></svg>
            <svg class="ico-mid" viewBox="0 0 28 28"><use href="#remove"/></svg>
            <div class="v-grip"></div>
            <svg width="28" height="12"><path d="M17 2l4 4 4-4M17 7l4 4 4-4" fill="none" stroke="#8f8e9b"/></svg>
        </aside>
    </main>

    <div class="tool-bottom d-flex flex-shrink-0">
        <div class="grip"></div>
        <svg class="ico" viewBox="3 0 28 28"><use href="#new"/></svg>
        <svg class="ico" viewBox="3 0 28 28"><use href="#open"/></svg>
        <svg class="ico" viewBox="3 0 28 28"><use href="#save"/></svg>
        <svg class="ico" viewBox="3 0 28 28"><use href="#print"/></svg>
        <svg class="ico" viewBox="3 0 28 28"><use href="#cut"/></svg>
        <svg class="ico" viewBox="3 0 28 28"><use href="#copy"/></svg>
        <svg class="ico" viewBox="3 0 28 28"><use href="#paste"/></svg>
        <svg class="ico" viewBox="3 0 28 28"><use href="#undo"/></svg>
        <svg class="ico ico-30" viewBox="3 0 28 28"><use href="#redo"/></svg>
        <svg class="ico ico-30" viewBox="3 0 28 28"><use href="#help"/></svg>
        <div class="grip"></div>
        <svg class="ico" viewBox="2 0 28 28"><text x="4" y="20" font-family="Liberation Serif, serif" font-style="italic" font-weight="bold" font-size="19" fill="#111">f</text><text x="11" y="20" font-family="Liberation Serif, serif" font-style="italic" font-weight="bold" font-size="14" textLength="14" fill="#111">(x)</text></svg>
        <svg class="ico" viewBox="2 0 28 28"><use href="#bubble"/></svg>
        <svg class="ico ico-22" viewBox="2 0 22 28"><use href="#chain"/></svg>
        <svg class="ico" viewBox="2 0 28 28"><use href="#table"/></svg>
        <svg class="ico ico-30" viewBox="1 0 28 28"><use href="#links"/></svg>
        <svg class="ico ico-30" viewBox="2 0 28 28"><use href="#lock"/></svg>
        <svg class="ico" viewBox="2 0 28 28"><use href="#brace"/></svg>
        <div class="grip"></div>
        <svg class="ico" viewBox="2 0 28 28"><use href="#fly"/></svg>
        <svg class="ico" viewBox="2 0 28 28"><use href="#fit"/></svg>
        <svg class="ico" viewBox="2 0 28 28"><use href="#pan"/></svg>
        <svg class="ico" viewBox="2 0 28 28"><use href="#hand"/></svg>
        <svg class="ico" viewBox="2 0 28 28"><use href="#zoomin"/></svg>
        <svg class="ico" viewBox="2 0 28 28"><use href="#zoomer"/></svg>
        <svg class="ico" viewBox="2 0 28 28"><use href="#normal"/></svg>
        <svg class="ico" viewBox="2 0 28 28"><use href="#quad"/></svg>
        <svg class="ico" viewBox="2 0 28 28"><use href="#iso"/></svg>
        <svg class="ico ico-32" viewBox="1 0 28 28"><use href="#shade"/></svg>
        <svg class="ico" viewBox="1 0 28 28"><use href="#hide1"/></svg>
        <svg class="ico ico-30" viewBox="2 0 28 28"><use href="#hide2"/></svg>
        <div class="grip"></div>
        <svg class="ico" viewBox="2 0 28 28"><use href="#update"/></svg>
        <div class="grip"></div>
        <svg class="ico" viewBox="2 0 28 28"><use href="#measure"/></svg>
        <svg class="ico" viewBox="2 0 28 28"><use href="#clamp"/></svg>
        <svg class="ico" viewBox="2 0 28 28"><use href="#weight"/></svg>
        <div class="grip"></div>
        <svg class="ico ico-30" viewBox="1 0 28 28"><use href="#camera"/></svg>
        <div class="grip"></div>
        <svg class="ico" viewBox="2 0 28 28"><use href="#r1"/></svg>
        <svg class="ico ico-30" viewBox="2 0 28 28"><use href="#r2"/></svg>
        <svg class="ico" viewBox="2 0 28 28"><use href="#r3"/></svg>
        <svg class="ico" viewBox="1 0 28 28"><use href="#r4"/></svg>
        <div class="grip"></div>
        <svg class="ico" viewBox="1 0 28 28"><use href="#r5"/></svg>
        <svg class="ms-auto" width="48" height="38" viewBox="1314 666 48 38"><use href="#ds" transform="translate(1318 667) scale(1 .94)"/><text x="1327" y="697" textLength="32" lengthAdjust="spacingAndGlyphs" font-size="8.500" font-weight="bold" font-style="italic" fill="#2a2870">CATIA</text></svg>
    </div>

    <div class="status d-flex align-items-center flex-shrink-0">
        <span class="ps-1">Select an object or a command</span>
        <div class="power-input ms-auto"></div>
        <svg class="push" viewBox="0 0 31 21"><path d="M10 6h9v7h-9zM22 12v3h-8" fill="none" stroke="#8c8b98"/></svg>
        <svg class="push" viewBox="0 0 31 21"><circle cx="16" cy="10" r="5" fill="none" stroke="#8c8b98"/><path d="M14 8h5v4h-5zM10 15h14V5" fill="none" stroke="#8c8b98"/></svg>
    </div>

    <footer class="task d-flex align-items-center flex-shrink-0">
        <svg width="48" height="36"><path d="M16 13l7-1v7.500h-7zM24 12l8-1.200v8.700h-8zM16 20.500h7V28l-7-1zM24 20.500h8v8.700L24 28z" fill="#fff"/></svg>
        <div class="search-box d-flex align-items-center">
            <svg width="40" height="36"><circle cx="20" cy="20" r="9" fill="none" stroke="#111" stroke-width="3"/></svg>
            <span class="pt-1">Type here to search</span>
            <svg class="ms-auto me-2" width="26" height="36"><path d="M10.500 12.500h5v10h-5zM8 20v2q0 4 5 4t5-4v-2M13 26v3M10 28.500h6" fill="none" stroke="#333" stroke-width="1.200"/></svg>
        </div>
        <div class="apps d-flex h-100">
            <div><svg width="18" height="18"><path d="M1 1v3h11V1M2 6.500h9v6H2zM1 17v-3h11v3M15.500 1v16" fill="none" stroke="#fff" stroke-width="1.300"/><path d="M14 6h3v3h-3z" fill="#fff"/></svg></div>
            <div><svg width="24" height="22"><path d="M1 3h8l2 2h11v15H1z" fill="#f5d272"/><path d="M1 7h21v4H1z" fill="#fae9a8"/><path d="M5 20v-6q0-2 2-2h9q2 0 2 2v6h-4v-4H9v4z" fill="#3fa2dc"/></svg></div>
            <div><svg width="22" height="22"><circle cx="11" cy="11" r="11" fill="#e2b32e"/><path d="M1.500 5.500A11 11 0 0 1 20.600 6H11l-5 7z" fill="#d8392b"/><path d="M1.500 5.500A11 11 0 0 0 10 22l5-9H6.500z" fill="#3a9a4a"/><circle cx="11" cy="11" r="5" fill="#fff"/><circle cx="11" cy="11" r="3.900" fill="#3f7ee0"/></svg></div>
            <div class="ps-2"><svg width="34" height="26"><path d="M1 9l12-7 12 7v12H1z" fill="#fff"/><path d="M3 9l10 8 10-8z" fill="#08080a"/><path d="M5 9l8-2 8 2z" fill="#fff"/><circle cx="26" cy="18" r="9" fill="#4c4c4e" stroke="#888"/><text x="20" y="22.500" font-size="12" textLength="12" font-weight="600" fill="#fff">51</text></svg></div>
            <div><svg width="22" height="22"><circle cx="11" cy="11" r="10" fill="url(#ball)"/><path d="M2 10q8 6 17 0-1 8-8 7-8 0-9-7z" fill="#16283c"/><path d="M6 17q6 3 10 0" stroke="#f4f4f4" stroke-width="3"/></svg></div>
            <div><svg width="24" height="24"><path fill-rule="evenodd" d="M12 1a11 11 0 1 0 .1 0zM12 4.500c3 0 4.500 4 4.500 7.500S15 19.500 12 19.500 7.500 16 7.500 12 9 4.500 12 4.500z" fill="#e0222e"/></svg></div>
            <div class="on"><svg width="23" height="23" viewBox="0 0 16 16"><use href="#app"/><path d="M.5.500h15v15H.5z" fill="none" stroke="#fff"/></svg></div>
        </div>
        <div class="d-flex ms-auto align-items-center">
            <svg width="36" height="36"><g fill="none" stroke="#fff" stroke-width="1.200"><circle cx="12" cy="19" r="2.800"/><path d="M7.500 27q0-5 4.500-5t4.500 5"/><circle cx="19" cy="14.500" r="2.800"/><path d="M17 19q5-3 6 4"/></g></svg>
            <svg width="28" height="36"><path d="M9 24l5.500-6 5.500 6" fill="none" stroke="#fff" stroke-width="1.300"/></svg>
            <svg width="24" height="36"><path d="M3.500 15.500h12v9h-12zM16 18h2v4h-2" fill="none" stroke="#fff" stroke-width="1.300"/><path d="M5.500 17.500h6v5h-6z" fill="#fff"/></svg>
            <svg width="24" height="36"><path d="M3 18h3l4-4v13l-4-4H3zM12 18q2 2.500 0 5M14.500 16q3 4.500 0 9M17 14q5 6 0 13" fill="none" stroke="#fff" stroke-width="1.200"/></svg>
            <svg width="26" height="36"><path d="M8 26q1-9 10-10M11 26q1-6 7-7M14 26q1-3 4-4M6 25Q8 15 18 13" fill="none" stroke="#ddd" stroke-width="1.100"/><circle cx="17" cy="25.500" r="1.600" fill="#fff"/></svg>
            <div class="clock">3:36 PM<br>5/28/2019</div>
            <svg width="46" height="36"><path d="M10 12h16v14h-7l-3 4v-4h-6z" fill="#fff"/><path d="M13 16h10M13 19h10M13 22h6" stroke="#111"/><circle cx="25" cy="26" r="9.500" fill="#4c4c4e" stroke="#999"/><text x="18" y="30.500" font-size="12" textLength="14" font-weight="600" fill="#fff">20</text></svg>
        </div>
    </footer>

    <!-- floating toolbars -->
    <section class="float-bar f-sketch">
        <header class="d-flex justify-content-between"><span>S</span><b>x</b></header>
        <div class="bar-line"></div>
        <svg class="ico" viewBox="0 0 28 28"><use href="#pencil"/><use href="#drop" x="26" y="25"/></svg>
    </section>
    <section class="float-bar f-pair">
        <header class="d-flex justify-content-between"><span>Sketc...</span><b>x</b></header>
        <div class="d-flex">
            <div class="grip"></div>
            <svg class="ico" viewBox="2 2 24 24"><use href="#pencil"/></svg>
            <svg class="ico" viewBox="2 2 24 24"><use href="#pencil-pos"/></svg>
        </div>
    </section>
    <section class="float-bar f-solid">
        <header class="d-flex justify-content-between"><span>S</span><b>x</b></header>
        <div class="bar-line"></div>
        <svg class="ico" viewBox="0 0 28 28"><use href="#pad"/></svg>
        <svg class="ico" viewBox="0 0 28 28"><use href="#pocket"/></svg>
        <svg class="ico" viewBox="0 0 28 28"><use href="#shaft"/></svg>
        <svg class="ico" viewBox="0 0 28 28"><use href="#groove"/></svg>
        <svg class="ico" viewBox="0 0 28 28"><use href="#hole"/></svg>
        <svg class="ico" viewBox="0 0 28 28"><use href="#rib"/></svg>
        <svg class="ico" viewBox="0 0 28 28"><use href="#slot"/></svg>
        <svg class="ico" viewBox="0 0 28 28"><use href="#cube"/></svg>
        <svg class="ico" viewBox="0 0 28 28"><use href="#loft"/></svg>
        <svg class="ico" viewBox="0 0 28 28"><use href="#loft2"/></svg>
    </section>
    <section class="float-bar f-surface">
        <header class="d-flex justify-content-between"><span>S</span><b>x</b></header>
        <div class="bar-line"></div>
        <svg class="ico" viewBox="0 0 28 28"><use href="#surface"/></svg>
    </section>
    <section class="float-bar f-ref">
        <header class="d-flex justify-content-between"><span>R</span><b>x</b></header>
        <div class="bar-line"></div>
        <svg class="ico" viewBox="0 0 28 28"><use href="#dot"/></svg>
        <svg class="ico" viewBox="0 0 28 28"><use href="#line"/></svg>
        <svg class="ico" viewBox="0 0 28 28"><use href="#plane"/></svg>
    </section>
    <section class="float-bar f-cons">
        <header class="d-flex justify-content-between"><span>C</span><b>x</b></header>
        <div class="bar-line"></div>
        <svg class="ico" viewBox="0 0 28 28"><use href="#grey-cons"/></svg>
        <svg class="ico" viewBox="0 0 28 28"><use href="#cons"/></svg>
    </section>

    <div class="activate">
        <div class="big">Activate Windows</div>
        <div class="sub">Go to Settings to activate Windows.</div>
    </div>

    <!-- Bootstrap JS -->
    <script src="https://cdn.jsdelivr.net/npm/bootstrap@5.3.1/dist/js/bootstrap.bundle.min.js"></script>
</body>
</html>
